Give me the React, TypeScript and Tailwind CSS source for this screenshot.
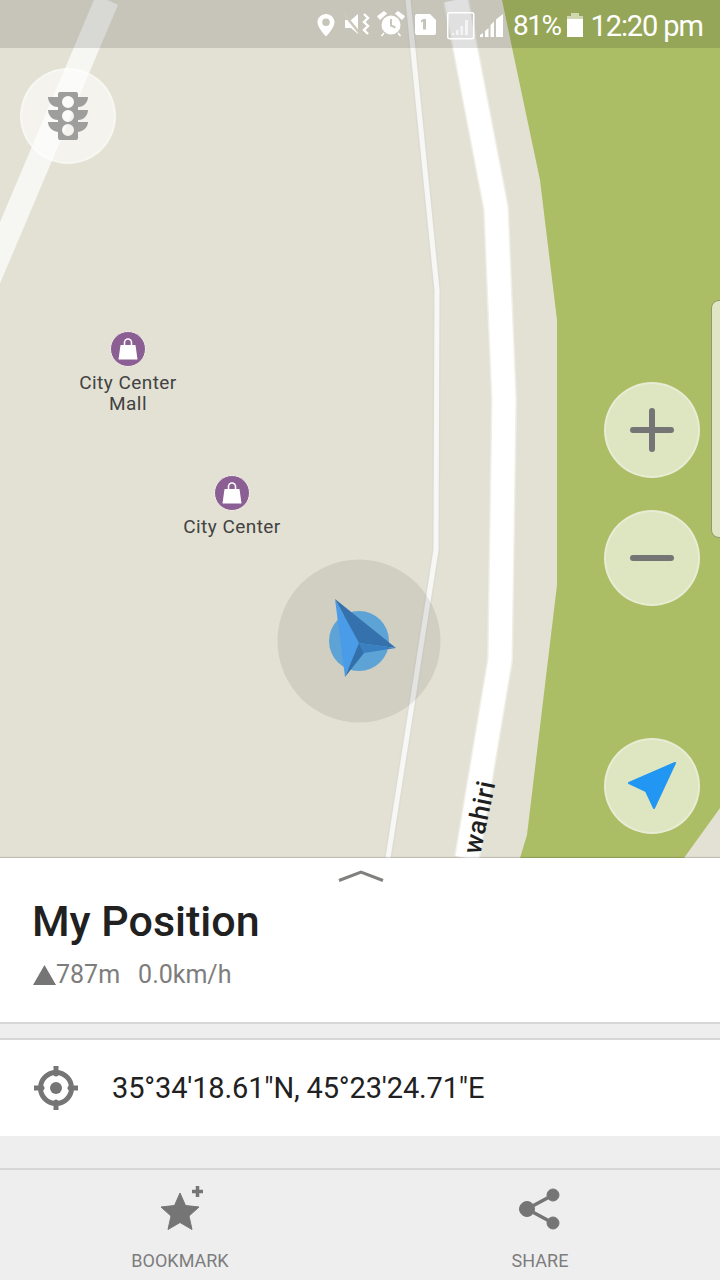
import React from 'react';

const StatusIcons = () => (
  <svg width="190" height="30" viewBox="0 0 190 30" fill="#fff" className="shrink-0">
    {/* location pin */}
    <path fillRule="evenodd" d="M9 3c-4.800 0-8.500 3.700-8.500 8.300C.5 17 9 25.500 9 25.500s8.500-8.500 8.500-14.200C17.500 6.700 13.800 3 9 3zm0 4.500a3.800 3.800 0 1 1 0 7.600 3.800 3.800 0 0 1 0-7.600z" />
    {/* vibrate + mute */}
    <path d="M28 9h6l7-6v20l-7-6h-6z" />
    <path d="M27 3l17 21" stroke="#c9c8bb" strokeWidth="2.500" />
    <path d="M47 3l4 4-4 4 4 4-4 4 4 4" fill="none" stroke="#fff" strokeWidth="2.400" />
    {/* alarm */}
    <circle cx="74" cy="14" r="9.500" />
    <path d="M74 8v6.500l4.500 2" fill="none" stroke="#c9c8bb" strokeWidth="2" />
    <path d="M63 8l6-5.500-2-1.500-6 4.500zM85 8l-6-5.500 2-1.500 6 4.500zM67 22l-2.500 3M81 22l2.500 3" stroke="#fff" strokeWidth="1.500" />
    {/* sim */}
    <path fillRule="evenodd" d="M100 3h13l6 6v13a2 2 0 0 1-2 2h-17a2 2 0 0 1-2-2V5a2 2 0 0 1 2-2zm9 5h-3l-2 1.500v2l2-1v8h3z" />
    {/* signal in box */}
    <rect x="130.750" y="1.750" width="26" height="26" rx="2" fill="none" stroke="#fff" strokeWidth="1.500" />
    <path d="M135 22h2v2h-2zM139 19h2.500v5H139zM143.500 15h2.500v9h-2.500zM148 9h3v15h-3z" opacity=".65" />
    {/* signal */}
    <path d="M163 26v-2l3-2v4zM168 26v-6l3.500-3v9zM173.500 26V14l3.500-3.500V26zM179 26V8.500L186 3v23z" />
  </svg>
);

const Poi = ({ className, lines }: { className: string; lines: string[] }) => (
  <div className={`absolute flex w-[140px] flex-col items-center ${className}`}>
    <div className="flex h-9 w-9 items-center justify-center rounded-full border border-[#f1efe6] bg-[#8b5f94]">
      <svg width="22" height="24" viewBox="0 0 22 24" fill="#fff">
        <path d="M3.500 8h15l2 14.500h-19z" />
        <path d="M7.500 9V5.500a3.500 3.500 0 0 1 7 0V9" fill="none" stroke="#fff" strokeWidth="1.600" />
      </svg>
    </div>
    <div className="mt-[5px] text-center text-[19px] font-[450] leading-[21px] tracking-[0.45px] text-[#424242]">
      {lines.map((line) => (
        <div key={line}>{line}</div>
      ))}
    </div>
  </div>
);

const MapButton = ({ className, children }: { className: string; children: React.ReactNode }) => (
  <div className={`absolute flex h-24 w-24 items-center justify-center rounded-full border-2 border-white/30 bg-white/60 ${className}`}>
    {children}
  </div>
);

export default function App() {
  return (
    <div className="flex h-[1280px] w-[720px] flex-col overflow-hidden bg-[#eeeeee] font-['Roboto',sans-serif]">
      {/* Map */}
      <div className="relative h-[858px] shrink-0 overflow-hidden bg-[#e3e1d3]">
        <svg width="720" height="858" viewBox="0 0 720 858" className="absolute inset-0">
          <path d="M502 0L540 180L557 320V585L527 835L520 858H684L720 808V0Z" fill="#abbd65" />
          <path d="M107 0L-20 300" stroke="#f6f6f3" strokeWidth="24" fill="none" />
          <path d="M456 0L496 208L504 400L500 660L467 858" stroke="#efeee7" strokeWidth="26" fill="none" />
          <path d="M456 0L496 208L504 400L500 660L467 858" stroke="#ffffff" strokeWidth="23" fill="none" />
          <path d="M408 0L437 290L436 550L388 858" stroke="#dddcd3" strokeWidth="8" fill="none" />
          <path d="M408 0L437 290L436 550L388 858" stroke="#f7f7f5" strokeWidth="5" fill="none" />
          {/* position marker */}
          <circle cx="359" cy="641" r="81.500" fill="#000" fillOpacity="0.08" />
          <circle cx="359" cy="641" r="30" fill="#5ea3d5" />
          <path d="M335 599L359 643L345 677Z" fill="#4a9be8" />
          <path d="M335 599L396 648L359 643Z" fill="#3572ad" />
          <path d="M359 643L396 648L364 653Z" fill="#3a7fc0" />
          <path d="M359 643L364 653L345 677Z" fill="#3270ab" />
        </svg>

        <div className="absolute left-[429px] top-[803px] w-[100px] rotate-[-78deg] text-center text-[26px] font-medium leading-[28px] tracking-[0.6px] text-[#1f1f1f]">
          wahiri
        </div>

        <Poi className="left-[58px] top-[331px]" lines={['City Center', 'Mall']} />
        <Poi className="left-[162px] top-[475px]" lines={['City Center']} />

        {/* Status bar */}
        <div className="absolute inset-x-0 top-0 flex h-12 items-center bg-black/[0.12] pl-[317px] pt-1 text-white">
          <StatusIcons />
          <span className="ml-[6px] text-[28px] leading-none tracking-[-1.5px]">81%</span>
          <svg width="16" height="24" viewBox="0 0 16 24" className="ml-[7px] mt-[-2px] shrink-0">
            <path d="M4 0h8v3H4z" fill="#fff" opacity=".55" />
            <path d="M0 3h16v21H0z" fill="#fff" opacity=".55" />
            <path d="M0 6h16v18H0z" fill="#fff" />
          </svg>
          <span className="ml-[7px] whitespace-nowrap text-[29px] leading-none tracking-[-1.1px]">12:20 pm</span>
        </div>

        {/* Side drawer handle */}
        <div className="absolute right-[-8px] top-[300px] h-[238px] w-[17px] rounded-l-lg border border-[#8f9a6e] bg-[#e0e6c4]" />

        <MapButton className="left-[20px] top-[68px]">
          <svg width="40" height="48" viewBox="0 0 40 48" fill="#9e9e9c">
            <path
              fillRule="evenodd"
              d="M10 2a2 2 0 0 1 2-2h16a2 2 0 0 1 2 2v3h10c0 5-4 10-10 10v3h10c0 5-4 10-10 10v2h10c0 5-4 9-10 10v6a2 2 0 0 1-2 2H12a2 2 0 0 1-2-2v-6C4 39 0 35 0 30h10v-2C4 28 0 23 0 18h10v-3C4 15 0 10 0 5h10zM20 4a6 6 0 1 0 0 12 6 6 0 0 0 0-12zm0 14a6 6 0 1 0 0 12 6 6 0 0 0 0-12zm0 14a6 6 0 1 0 0 12 6 6 0 0 0 0-12z"
            />
          </svg>
        </MapButton>
        <MapButton className="left-[604px] top-[382px]">
          <svg width="44" height="44" viewBox="0 0 44 44" stroke="#757575" strokeWidth="6" strokeLinecap="round">
            <path d="M3 22h38M22 3v38" />
          </svg>
        </MapButton>
        <MapButton className="left-[604px] top-[510px]">
          <svg width="44" height="44" viewBox="0 0 44 44" stroke="#757575" strokeWidth="6" strokeLinecap="round">
            <path d="M3 22h38" />
          </svg>
        </MapButton>
        <MapButton className="left-[604px] top-[738px]">
          <svg width="50" height="50" viewBox="0 0 50 50" fill="#2196f3" stroke="#2196f3" strokeWidth="2" strokeLinejoin="round">
            <path d="M48 2L2 22L19 30L27 47Z" />
          </svg>
        </MapButton>
      </div>

      {/* Bottom sheet */}
      <div className="relative h-[164px] shrink-0 bg-white px-[33px] pt-[38px] shadow-[0_-1px_1px_rgba(0,0,0,0.15)]">
        <svg width="46" height="12" viewBox="0 0 46 12" className="absolute left-[338px] top-[12px]" fill="none" stroke="#80807e" strokeWidth="3">
          <path d="M1 10.500L23 2L45 10.500" />
        </svg>
        <div className="ml-[-1px] text-[43px] font-medium leading-[50px] text-[#212121]">My Position</div>
        <div className="mt-[14px] flex items-center text-[25px] leading-[30px] text-[#7d7d7d]">
          <svg width="23" height="20" viewBox="0 0 23 20" fill="#757575" className="shrink-0">
            <path d="M11.500 0L23 20H0Z" />
          </svg>
          <span>787m</span>
          <span className="ml-[18px]">0.0km/h</span>
        </div>
      </div>

      <div className="box-content h-[14px] shrink-0 border-y-2 border-[#d6d6d6] bg-[#eeeeee]" />

      <div className="flex h-24 shrink-0 items-center bg-white pl-[34px]">
        <svg width="44" height="44" viewBox="0 0 44 44" className="shrink-0">
          <circle cx="22" cy="22" r="15.500" fill="none" stroke="#757575" strokeWidth="5" />
          <circle cx="22" cy="22" r="6" fill="#757575" />
          <path d="M22 0v8M22 36v8M0 22h8M36 22h8" stroke="#757575" strokeWidth="5" strokeLinecap="round" />
        </svg>
        <span className="ml-[34px] whitespace-nowrap text-[29px] leading-none tracking-[-0.15px] text-[#212121]">35°34'18.61"N, 45°23'24.71"E</span>
      </div>

      <div className="mt-8 flex flex-1 border-t-2 border-[#d6d6d6]">
        <div className="flex w-[360px] flex-col items-center pt-4">
          <svg width="44" height="46" viewBox="0 0 44 46" fill="#757575" className="ml-[4px]">
            <path d="M20 7l5.500 12.500 13.500 1.500-10 9 3 13.500-12-7-12 7 3-13.500-10-9 13.500-1.500z" stroke="#757575" strokeLinejoin="round" />
            <path d="M32 5.500h11M37.500 0v11" stroke="#757575" strokeWidth="3.500" />
          </svg>
          <span className="mt-[18px] text-[18px] leading-[22px] text-[#7d7d7d]">BOOKMARK</span>
        </div>
        <div className="flex w-[360px] flex-col items-center pt-[18px]">
          <svg width="42" height="42" viewBox="0 0 42 42" fill="#757575" stroke="#757575">
            <circle cx="34" cy="7" r="6" />
            <circle cx="34" cy="35" r="6" />
            <circle cx="8" cy="21" r="7.500" />
            <path d="M34 7L8 21L34 35" fill="none" strokeWidth="3.500" />
          </svg>
          <span className="mt-5 text-[18px] leading-[22px] text-[#7d7d7d]">SHARE</span>
        </div>
      </div>
    </div>
  );
}
